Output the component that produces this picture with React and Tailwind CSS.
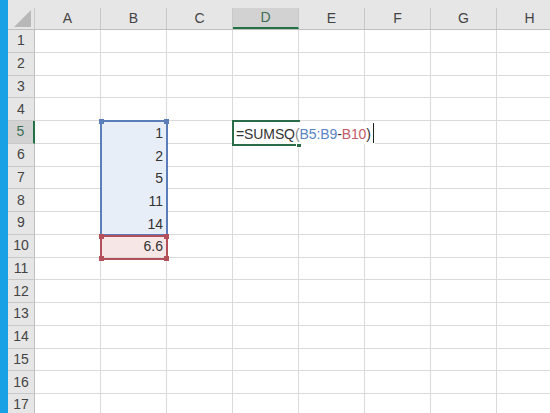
import React from 'react';

const cols = ['A', 'B', 'C', 'D', 'E', 'F', 'G', 'H'];
const rows = Array.from({ length: 17 }, (_, i) => i + 1);
const values = { 5: '1', 6: '2', 7: '5', 8: '11', 9: '14', 10: '6.6' };

function Handle({ className }) {
  return <div className={`absolute w-[5px] h-[5px] ${className}`} />;
}

export default function App() {
  return (
    <div
      className="w-[550px] h-[413px] overflow-hidden flex bg-white text-[#444]"
      style={{ fontFamily: '"Liberation Sans", Arial, sans-serif' }}
    >
      <div className="w-[8px] shrink-0 bg-[#19a1e6]" />
      <div className="relative flex-1 flex flex-col">
        <div className="h-[8px] shrink-0 bg-[#e6e6e6]" />

        {/* column headers */}
        <div className="h-[22px] shrink-0 flex bg-[#e6e6e6] border-b border-[#bfbfbf]">
          <div className="w-[27px] shrink-0 border-r border-[#c8c8c8] flex items-end justify-end pr-[2px] pb-[1px]">
            <svg width="18" height="18" viewBox="0 0 18 18">
              <polygon points="17,0 17,17 0,17" fill="#b8b8b8" />
            </svg>
          </div>
          {cols.map((c) => (
            <div
              key={c}
              className={`w-[66px] shrink-0 flex items-center justify-center text-[14px] border-r border-[#c8c8c8] ${
                c === 'D' ? 'bg-[#d2d2d2] text-[#3c6e53] border-b-2 border-b-[#217346]' : ''
              }`}
            >
              {c}
            </div>
          ))}
        </div>

        {/* rows */}
        {rows.map((r) => (
          <div key={r} className="h-[22.75px] shrink-0 flex">
            <div
              className={`w-[27px] shrink-0 flex items-center justify-center text-[14px] border-b border-[#c8c8c8] ${
                r === 5
                  ? 'bg-[#d2d2d2] text-[#3c6e53] border-r-2 border-r-[#217346]'
                  : 'bg-[#e6e6e6] border-r border-r-[#bfbfbf]'
              }`}
            >
              {r}
            </div>
            {cols.map((c) => {
              const inBlue = c === 'B' && r >= 5 && r <= 9;
              const inRed = c === 'B' && r === 10;
              return (
                <div
                  key={c}
                  className={`w-[66px] shrink-0 border-r border-[#dadada] flex items-end justify-end pr-[3px] pb-[2px] text-[14px] leading-[18px] text-[#333] ${
                    inBlue ? 'bg-[#e8eef8]' : inRed ? 'bg-[#f7e6e6] border-b' : 'border-b'
                  }`}
                >
                  {c === 'B' ? values[r] : null}
                </div>
              );
            })}
          </div>
        ))}

        {/* B5:B9 range highlight */}
        <div className="absolute left-[92px] top-[120px] w-[68px] h-[116px] border-2 border-[#5b7dba]">
          <Handle className="-left-[3px] -top-[3px] bg-[#5b7dba]" />
          <Handle className="-right-[3px] -top-[3px] bg-[#5b7dba]" />
        </div>
        {/* B10 range highlight */}
        <div className="absolute left-[92px] top-[235px] w-[68px] h-[25px] border-2 border-[#b5505a]">
          <Handle className="-left-[3px] -top-[3px] bg-[#b5505a]" />
          <Handle className="-right-[3px] -top-[3px] bg-[#b5505a]" />
          <Handle className="-left-[3px] -bottom-[3px] bg-[#b5505a]" />
          <Handle className="-right-[3px] -bottom-[3px] bg-[#b5505a]" />
        </div>

        {/* D5 edit box */}
        <div className="absolute left-[224px] top-[120px] w-[68px] h-[26px] border-2 border-[#2b6c48]">
          <div className="absolute -right-[4px] -bottom-[4px] w-[6px] h-[6px] bg-[#2b6c48] border border-white" />
        </div>
        <div className="absolute left-[226px] top-[122px] h-[22px] flex items-center pt-[3px] bg-white pl-[2px] pr-[1px] text-[14px] tracking-[-0.1px] text-[#333] whitespace-nowrap">
          <span>=SUMSQ</span>
          <span className="text-[#8a8a8a]">(</span>
          <span className="text-[#5b84c4]">B5:B9</span>
          <span>-</span>
          <span className="text-[#c25a67]">B10</span>
          <span>)</span>
          <span className="ml-[2px] -mt-[3px] w-[1px] h-[20px] bg-[#222]" />
        </div>
      </div>
    </div>
  );
}
